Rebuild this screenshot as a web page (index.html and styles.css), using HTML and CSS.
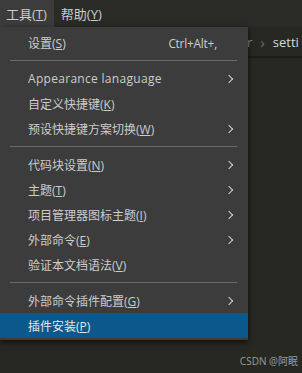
FILE: index.html
```html
<!DOCTYPE html>
<html>
  <head>
    <link rel="stylesheet" href="styles.css">
  </head>
  <body>
    <div class="menubar">
      <div class="top-item active">工具(<u>T</u>)</div>
      <div class="top-item">帮助(<u>Y</u>)</div>
    </div>
    <div class="editor">
      <div class="crumbs">
        <span class="crumb dim">r</span>
        <span class="crumb-sep">›</span>
        <span class="crumb">setti</span>
      </div>
      <div class="mark">CSDN @阿眠</div>
    </div>

    <div class="menu">
      <div class="item"><span class="label">设置(<u>S</u>)</span><span class="key">Ctrl+Alt+,</span></div>
      <div class="sep"></div>
      <div class="item sub"><span class="label latin">Appearance lanaguage</span></div>
      <div class="item"><span class="label">自定义快捷键(<u>K</u>)</span></div>
      <div class="item sub"><span class="label">预设快捷键方案切换(<u>W</u>)</span></div>
      <div class="sep"></div>
      <div class="item sub"><span class="label">代码块设置(<u>N</u>)</span></div>
      <div class="item sub"><span class="label">主题(<u>T</u>)</span></div>
      <div class="item sub"><span class="label">项目管理器图标主题(<u>I</u>)</span></div>
      <div class="item sub"><span class="label">外部命令(<u>E</u>)</span></div>
      <div class="item"><span class="label">验证本文档语法(<u>V</u>)</span></div>
      <div class="sep"></div>
      <div class="item sub"><span class="label">外部命令插件配置(<u>G</u>)</span></div>
      <div class="item selected"><span class="label">插件安装(<u>P</u>)</span></div>
    </div>
  </body>
</html>
```

FILE: styles.css
```css
* {
  margin: 0;
  padding: 0;
  box-sizing: border-box;
}

body {
  width: 302px;
  height: 373px;
  overflow: hidden;
  background: #272822;
  color: #cccccc;
  font-family: "Open Sans", "Noto Sans CJK SC", sans-serif;
  font-size: 12px;
  position: relative;
}

u {
  text-underline-offset: 1px;
}

.menubar {
  display: flex;
  height: 27px;
  background: #2a2b26;
}

.top-item {
  display: flex;
  align-items: center;
  padding: 0 7px 0 6px;
  font-size: 13px;
  color: #cccccc;
}

.top-item.active {
  background: #3c3c3c;
  margin-right: 1px;
}

.editor {
  height: 346px;
  display: flex;
  flex-direction: column;
}

.crumbs {
  display: flex;
  align-items: center;
  gap: 8px;
  height: 31px;
  padding-left: 247px;
  border-bottom: 2px solid #1d1e1a;
  white-space: nowrap;
  font-size: 13px;
}

.crumb {
  color: #d8d8d8;
}

.crumb.dim {
  color: #8f8f8f;
}

.crumb-sep {
  color: #6b6b6b;
  font-size: 15px;
}

.mark {
  margin-top: auto;
  align-self: flex-end;
  padding: 0 4px 5px 0;
  color: #9b9b9b;
  font-size: 10px;
}

.menu {
  position: absolute;
  top: 27px;
  left: 0;
  width: 248px;
  padding: 3px 0 2px;
  background: #3c3c3c;
  box-shadow: 0 2px 6px rgba(0, 0, 0, 0.65);
}

.item {
  display: flex;
  align-items: center;
  height: 25px;
  padding: 0 14px 0 28px;
  white-space: nowrap;
}

.item .label {
  flex: 1;
}

.item .key {
  margin-right: 17px;
  font-size: 11.8px;
  letter-spacing: -0.2px;
}

.item.sub::after {
  content: "";
  width: 5px;
  height: 5px;
  margin-right: 2px;
  border-top: 1.3px solid #d0d0d0;
  border-right: 1.3px solid #d0d0d0;
  transform: rotate(45deg);
}

.item.selected {
  background: #0b598c;
  color: #e6e6e6;
}

.latin {
  letter-spacing: 0.3px;
}

.sep {
  height: 1px;
  margin: 5px 11px 5px 10px;
  background: #6a6a6a;
}
```
